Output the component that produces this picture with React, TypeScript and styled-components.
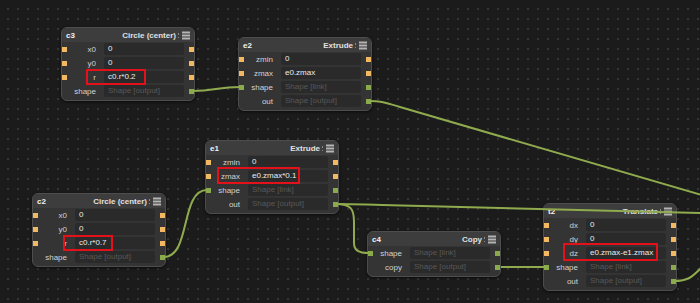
import React from 'react'
import styled, { createGlobalStyle } from 'styled-components'

type PortKind = 'num' | 'shape' | 'none'

interface Field {
  label: string
  value: string
  placeholder?: boolean
  left: PortKind
  right: PortKind
}

interface NodeData {
  id: string
  title: string
  x: number
  y: number
  fields: Field[]
}

const num = (label: string, value: string): Field => ({
  label,
  value,
  left: 'num',
  right: 'num',
})
const link = (label: string): Field => ({
  label,
  value: 'Shape [link]',
  placeholder: true,
  left: 'shape',
  right: 'shape',
})
const output = (label: string): Field => ({
  label,
  value: 'Shape [output]',
  placeholder: true,
  left: 'none',
  right: 'shape',
})

const nodes: NodeData[] = [
  {
    id: 'c3',
    title: 'Circle (center)',
    x: 61,
    y: 27,
    fields: [num('x0', '0'), num('y0', '0'), num('r', 'c0.r*0.2'), output('shape')],
  },
  {
    id: 'e2',
    title: 'Extrude',
    x: 238,
    y: 37,
    fields: [num('zmin', '0'), num('zmax', 'e0.zmax'), link('shape'), output('out')],
  },
  {
    id: 'e1',
    title: 'Extrude',
    x: 205,
    y: 140,
    fields: [num('zmin', '0'), num('zmax', 'e0.zmax*0.1'), link('shape'), output('out')],
  },
  {
    id: 'c2',
    title: 'Circle (center)',
    x: 32,
    y: 193,
    fields: [num('x0', '0'), num('y0', '0'), num('r', 'c0.r*0.7'), output('shape')],
  },
  {
    id: 'c4',
    title: 'Copy',
    x: 367,
    y: 231,
    fields: [link('shape'), output('copy')],
  },
  {
    id: 't2',
    title: 'Translate',
    x: 543,
    y: 203,
    fields: [
      num('dx', '0'),
      num('dy', '0'),
      num('dz', 'e0.zmax-e1.zmax'),
      link('shape'),
      output('out'),
    ],
  },
]

// hand-drawn red callouts from the screenshot
const marks = [
  { x: 86, y: 69, w: 60, h: 16 },
  { x: 217, y: 167, w: 83, h: 17 },
  { x: 63, y: 235, w: 50, h: 16 },
  { x: 563, y: 243, w: 95, h: 18 },
]

const wires = [
  'M193 91 C214 91, 218 87, 240 87',
  'M369 101 C384 101, 386 103, 400 107 L712 198',
  'M336 204 C351 204, 354 209, 354 222 L354 243 C354 250, 358 253, 369 253',
  'M336 204 C356 204, 362 204.5, 382 205 L702 213',
  'M164 257 C191 257, 180 190, 207 190',
  'M501 267 C520 267, 526 267, 546 267',
  'M674 281 C688 281, 692 277, 700 269 L712 256',
]

const GlobalStyle = createGlobalStyle`
  body {
    margin: 0;
    background: #1b1b1b;
    font-family: "Liberation Sans", Arial, sans-serif;
  }
`

const Canvas = styled.div`
  position: relative;
  width: 700px;
  height: 303px;
  overflow: hidden;
  background-color: #1b1b1b;
  background-image: radial-gradient(circle, #363636 0.7px, transparent 1px);
  background-size: 10px 10px;
  background-position: 3px 4px;
`

const NodeBox = styled.div<{ $x: number; $y: number }>`
  position: absolute;
  left: ${(p) => p.$x}px;
  top: ${(p) => p.$y}px;
  width: 134px;
  box-sizing: border-box;
  background: #343434;
  border: 1px solid #4d4d4d;
  border-radius: 6px;
  box-shadow: 0 1px 3px rgba(0, 0, 0, 0.6);
`

const Header = styled.div`
  display: flex;
  align-items: center;
  height: 14px;
  padding: 0 3px 0 4px;
  background: #3d3d3d;
  border-radius: 5px 5px 0 0;
  font-size: 8px;
  font-weight: bold;
`

const NodeId = styled.span`
  color: #f2f2f2;
  flex: 1;
`

const NodeTitle = styled.span`
  color: #e0e0e0;
  white-space: nowrap;
`

const Grip = styled.svg`
  margin-left: 2px;
  flex: none;
`

const Rows = styled.div`
  display: flex;
  flex-direction: column;
  gap: 2px;
  padding: 1px 0 3px;
`

const Row = styled.div`
  display: flex;
  align-items: center;
  height: 12px;
`

const Port = styled.span<{ $kind: PortKind }>`
  width: 5px;
  height: 5px;
  flex: none;
  background: ${(p) =>
    p.$kind === 'num' ? '#f2b962' : p.$kind === 'shape' ? '#8aab4c' : 'transparent'};
`

const Label = styled.span`
  width: 29px;
  margin-right: 8px;
  text-align: right;
  font-size: 8px;
  color: #d2d2d2;
  white-space: nowrap;
`

const Input = styled.span<{ $dim?: boolean }>`
  width: 80px;
  height: 12px;
  line-height: 12px;
  box-sizing: border-box;
  padding-left: 4px;
  background: #2a2a2a;
  border-radius: 2px;
  font-size: 8px;
  color: ${(p) => (p.$dim ? '#585858' : '#ececec')};
  white-space: nowrap;
  overflow: hidden;
`

const Spacer = styled.span`
  flex: 1;
`

const WireLayer = styled.svg`
  position: absolute;
  left: 0;
  top: 0;
  pointer-events: none;
`

const Callout = styled.div<{ $x: number; $y: number; $w: number; $h: number }>`
  position: absolute;
  left: ${(p) => p.$x}px;
  top: ${(p) => p.$y}px;
  width: ${(p) => p.$w}px;
  height: ${(p) => p.$h}px;
  box-sizing: border-box;
  border: 2px solid #e3121a;
  pointer-events: none;
`

const MenuGrip = () => (
  <Grip width="13" height="9" viewBox="0 0 13 9">
    <rect x="0" y="2" width="1" height="2" fill="#8a8a8a" />
    <rect x="0" y="6" width="1" height="1" fill="#8a8a8a" />
    <rect x="4" y="0.5" width="8" height="2" fill="#b4b4b4" />
    <rect x="4" y="3.5" width="8" height="2" fill="#b4b4b4" />
    <rect x="4" y="6.5" width="8" height="2" fill="#b4b4b4" />
  </Grip>
)

const GraphNode: React.FC<{ node: NodeData }> = ({ node }) => (
  <NodeBox $x={node.x} $y={node.y}>
    <Header>
      <NodeId>{node.id}</NodeId>
      <NodeTitle>{node.title}</NodeTitle>
      <MenuGrip />
    </Header>
    <Rows>
      {node.fields.map((f) => (
        <Row key={f.label}>
          <Port $kind={f.left} />
          <Label>{f.label}</Label>
          <Input $dim={f.placeholder}>{f.value}</Input>
          <Spacer />
          <Port $kind={f.right} />
        </Row>
      ))}
    </Rows>
  </NodeBox>
)

export default function App() {
  return (
    <>
      <GlobalStyle />
      <Canvas>
        {nodes.map((n) => (
          <GraphNode key={n.id} node={n} />
        ))}
        <WireLayer width="700" height="303" viewBox="0 0 700 303">
          {wires.map((d, i) => (
            <path key={i} d={d} fill="none" stroke="#8fab4e" strokeWidth="2" />
          ))}
        </WireLayer>
        {marks.map((m, i) => (
          <Callout key={i} $x={m.x} $y={m.y} $w={m.w} $h={m.h} />
        ))}
      </Canvas>
    </>
  )
}
